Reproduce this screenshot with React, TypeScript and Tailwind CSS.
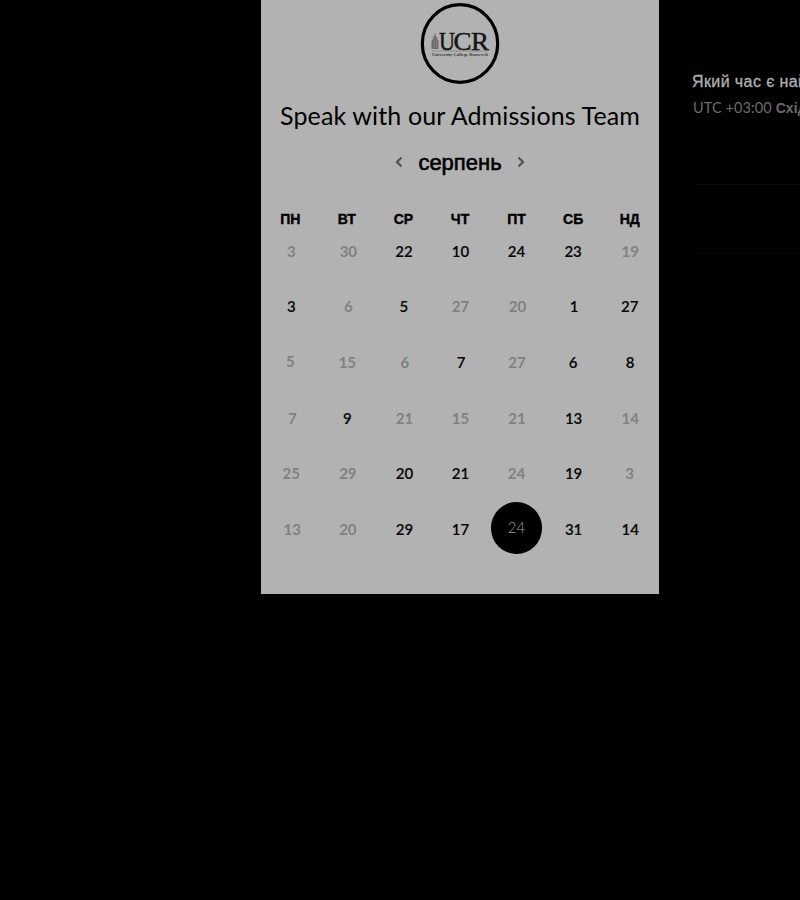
type Day = { n: number; muted?: boolean; selected?: boolean; nudge?: string };

const weekdays = ['ПН', 'ВТ', 'СР', 'ЧТ', 'ПТ', 'СБ', 'НД'];

const d = (n: number, nudge?: string): Day => ({ n, nudge });
const m = (n: number, nudge?: string): Day => ({ n, muted: true, nudge });

const weeks: Day[][] = [
  [m(3, 'pl-[2px]'), m(30, 'pl-[3px]'), d(22, 'pl-[1px]'), d(10, 'pl-[1px]'), d(24), d(23), m(19, 'pl-[1px]')],
  [d(3, 'pl-[2px]'), m(6, 'pl-[3px]'), d(5, 'pl-[1px]'), m(27, 'pl-[1px]'), m(20, 'pl-[2px]'), d(1, 'pl-[2px]'), d(27)],
  [m(5, 'pb-[2px]'), m(15, 'pl-[1px]'), m(6, 'pl-[3px]'), d(7, 'pl-[2px]'), m(27, 'pl-[1px]'), d(6), d(8, 'pl-[1px]')],
  [m(7, 'pl-[4px]'), d(9, 'pl-[1px]'), m(21, 'pl-[2px]'), m(15, 'pl-[1px]'), m(21, 'pl-[1px]'), d(13, 'pl-[1px]'), m(14, 'pl-[1px]')],
  [m(25, 'pl-[2px]'), m(29, 'pl-[2px]'), d(20, 'pl-[2px]'), d(21, 'pl-[1px]'), m(24), d(19, 'pl-[1px]'), m(3)],
  [m(13, 'pl-[4px]'), m(20, 'pl-[2px]'), d(29, 'pl-[2px]'), d(17, 'pl-[1px]'), { n: 24, selected: true }, d(31, 'pl-[1px]'), d(14, 'pl-[1px]')],
];

function Logo() {
  return (
    <svg width="80" height="82" viewBox="0 0 80 82" role="img" aria-label="UCR">
      <ellipse cx="40" cy="40.5" rx="37.7" ry="38.8" fill="none" stroke="#000" strokeWidth="3.2" />
      <path d="M11.5 46V38l1.3-2V32l1 3 1.2-6 1.2 6 1-3v4l1.3 2v8z" fill="#6a6a6a" />
      <path d="M14 35v10M16.5 36v9" stroke="#909090" strokeWidth="0.6" />
      <path d="M12 48h56" stroke="#666" strokeWidth="0.5" />
      <g fontFamily="Liberation Serif, serif" fontSize="25.5" fill="#161616" stroke="#161616" strokeWidth="0.5">
        <text x="19" y="46.5" textLength="16" lengthAdjust="spacingAndGlyphs">U</text>
        <text x="33.5" y="46.5" textLength="18" lengthAdjust="spacingAndGlyphs">C</text>
        <text x="51" y="46.5" textLength="18" lengthAdjust="spacingAndGlyphs">R</text>
      </g>
      <text x="12" y="52.5" fontFamily="Liberation Serif, serif" fontSize="4.6" fontWeight="700" fill="#3a3a3a" textLength="56" lengthAdjust="spacingAndGlyphs">University College Roosevelt</text>
    </svg>
  );
}

function Chevron({ points }: { points: string }) {
  return (
    <svg width="8" height="12" viewBox="0 0 8 12" fill="none" stroke="#555" strokeWidth="2.3">
      <polyline points={points} />
    </svg>
  );
}

function DayCell({ day }: { day: Day }) {
  if (day.selected) {
    return (
      <div className="flex h-[55.7px] items-center justify-center">
        <span className="-mt-[3px] flex h-[52px] w-[51px] shrink-0 items-center justify-center rounded-full bg-black pb-[2px] text-[15px] font-light text-[#a0a0a0]">
          {day.n}
        </span>
      </div>
    );
  }
  return (
    <div
      className={`flex h-[55.7px] items-center justify-center text-[15px] ${day.muted ? 'font-bold text-[#818181]' : 'font-semibold text-[#080808] [-webkit-text-stroke:0.15px_#080808]'} ${day.nudge ?? ''}`}
    >
      {day.n}
    </div>
  );
}

export default function App() {
  return (
    <div className="flex h-[900px] w-[800px] overflow-hidden bg-black pl-[261px] font-['Lato','Liberation_Sans',sans-serif]">
      <main className="flex h-[594px] w-[398px] shrink-0 flex-col bg-[#b2b2b2]">
        <div className="flex h-[85px] justify-center pt-[3px]">
          <Logo />
        </div>
        <h1 className="mt-[13px] h-[34px] text-center text-[25px] leading-[34px] tracking-[0.13px] whitespace-nowrap text-black">
          Speak with our Admissions Team
        </h1>
        <div className="mt-[15px] flex h-[30px] items-center justify-center gap-[15px]">
          <Chevron points="6.5,1.5 2,6 6.5,10.5" />
          <span className="font-['Liberation_Sans',sans-serif] text-[22px] text-black [-webkit-text-stroke:0.6px_black]">
            серпень
          </span>
          <Chevron points="1.5,1.5 6,6 1.5,10.5" />
        </div>
        <div className="mt-[32px] grid h-[20px] grid-cols-7 px-[1px] text-center font-['Liberation_Sans',sans-serif] text-[14px] leading-[20px] font-bold text-black [-webkit-text-stroke:0.4px_black]">
          {weekdays.map((w) => (
            <span key={w}>{w}</span>
          ))}
        </div>
        <div className="-mt-[6px] grid grid-cols-7 px-[1px]">
          {weeks.flat().map((day, i) => (
            <DayCell key={i} day={day} />
          ))}
        </div>
      </main>
      <aside className="w-[141px] shrink-0 overflow-hidden pt-[70px] pl-[33px] whitespace-nowrap">
        <p className="h-[24px] font-['Liberation_Sans',sans-serif] text-[16px] leading-[24px] tracking-[0.4px] text-[#b0b0b0] [-webkit-text-stroke:0.3px_#b0b0b0]">
          Який час є най
        </p>
        <p className="mt-[2px] h-[24px] pl-[1px] text-[14.5px] leading-[24px] tracking-[0.1px] text-[#6b6b6b]">
          UTC +03:00{' '}
          <span className="font-['Liberation_Sans',sans-serif] text-[14px] font-bold">Схід</span>
        </p>
        <div className="mt-[64px] ml-[4px] h-[70px] border-y border-[#090909]" />
      </aside>
    </div>
  );
}
